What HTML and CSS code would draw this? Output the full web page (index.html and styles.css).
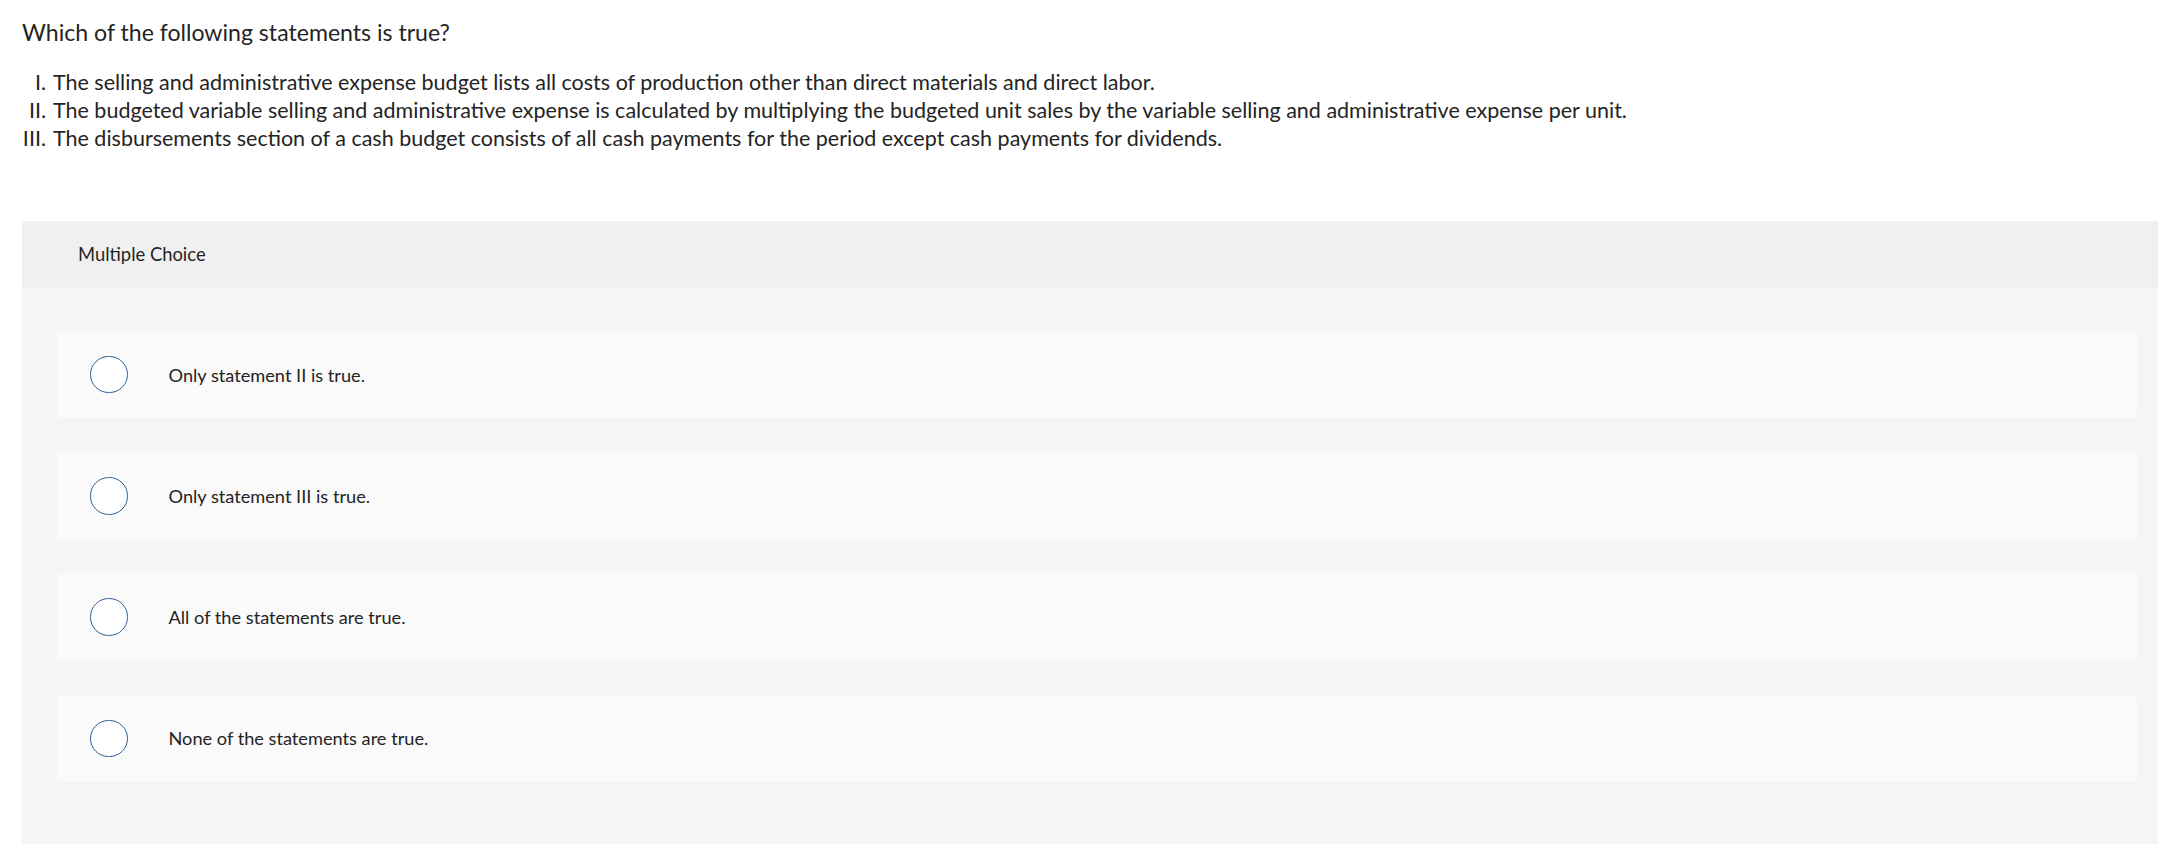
FILE: index.html
```html
<!DOCTYPE html>
<html lang="en">
<head>
<meta charset="utf-8">
<title>Multiple Choice</title>
<link rel="stylesheet" href="styles.css">
</head>
<body>
<main class="page">
  <p class="question">Which of the following statements is true?</p>
  <div class="statements">
    <div class="statement"><span class="num">I.</span><span class="stext">The selling and administrative expense budget lists all costs of production other than direct materials and direct labor.</span></div>
    <div class="statement"><span class="num">II.</span><span class="stext">The budgeted variable selling and administrative expense is calculated by multiplying the budgeted unit sales by the variable selling and administrative expense per unit.</span></div>
    <div class="statement"><span class="num">III.</span><span class="stext">The disbursements section of a cash budget consists of all cash payments for the period except cash payments for dividends.</span></div>
  </div>
  <section class="panel">
    <header class="panel-head">Multiple Choice</header>
    <div class="panel-body">
      <label class="option"><span class="radio"></span><span class="otext">Only statement II is true.</span></label>
      <label class="option"><span class="radio"></span><span class="otext">Only statement III is true.</span></label>
      <label class="option"><span class="radio"></span><span class="otext">All of the statements are true.</span></label>
      <label class="option"><span class="radio"></span><span class="otext">None of the statements are true.</span></label>
    </div>
  </section>
</main>
</body>
</html>
```
FILE: styles.css
```css
* { box-sizing: border-box; }
html, body { margin: 0; padding: 0; background: #fff; }
body {
  font-family: Lato, "Liberation Sans", sans-serif;
  color: #242424;
  overflow: hidden;
}
.page {
  padding: 18px 0 0 22px;
}
.question {
  margin: 0;
  font-size: 23.1px;
  line-height: 28px;
}
.statements {
  margin-top: 21.6px;
  font-size: 21.5px;
  line-height: 28px;
}
.statement {
  display: flex;
}
.num {
  flex: 0 0 24px;
  text-align: right;
  margin-right: 7px;
}
.panel {
  margin-top: 69.4px;
  border-radius: 4px 0 0 0;
  overflow: hidden;
}
.panel-head {
  height: 67px;
  background: #f0f0f0;
  display: flex;
  align-items: center;
  padding-left: 56px;
  font-size: 18.4px;
}
.panel-body {
  background: #f5f5f5;
  padding: 43px 21px 80px 35px;
  display: flex;
  flex-direction: column;
  gap: 33.7px;
}
.option {
  height: 87.5px;
  background: #fafafa;
  border-radius: 4px;
  display: flex;
  align-items: center;
  padding-left: 33px;
  font-size: 18.2px;
}
.radio {
  width: 37.5px;
  height: 37.5px;
  border: 1.5px solid #2f5f93;
  border-radius: 50%;
  background: #fff;
  flex: 0 0 auto;
  margin-right: 41px;
}
```
